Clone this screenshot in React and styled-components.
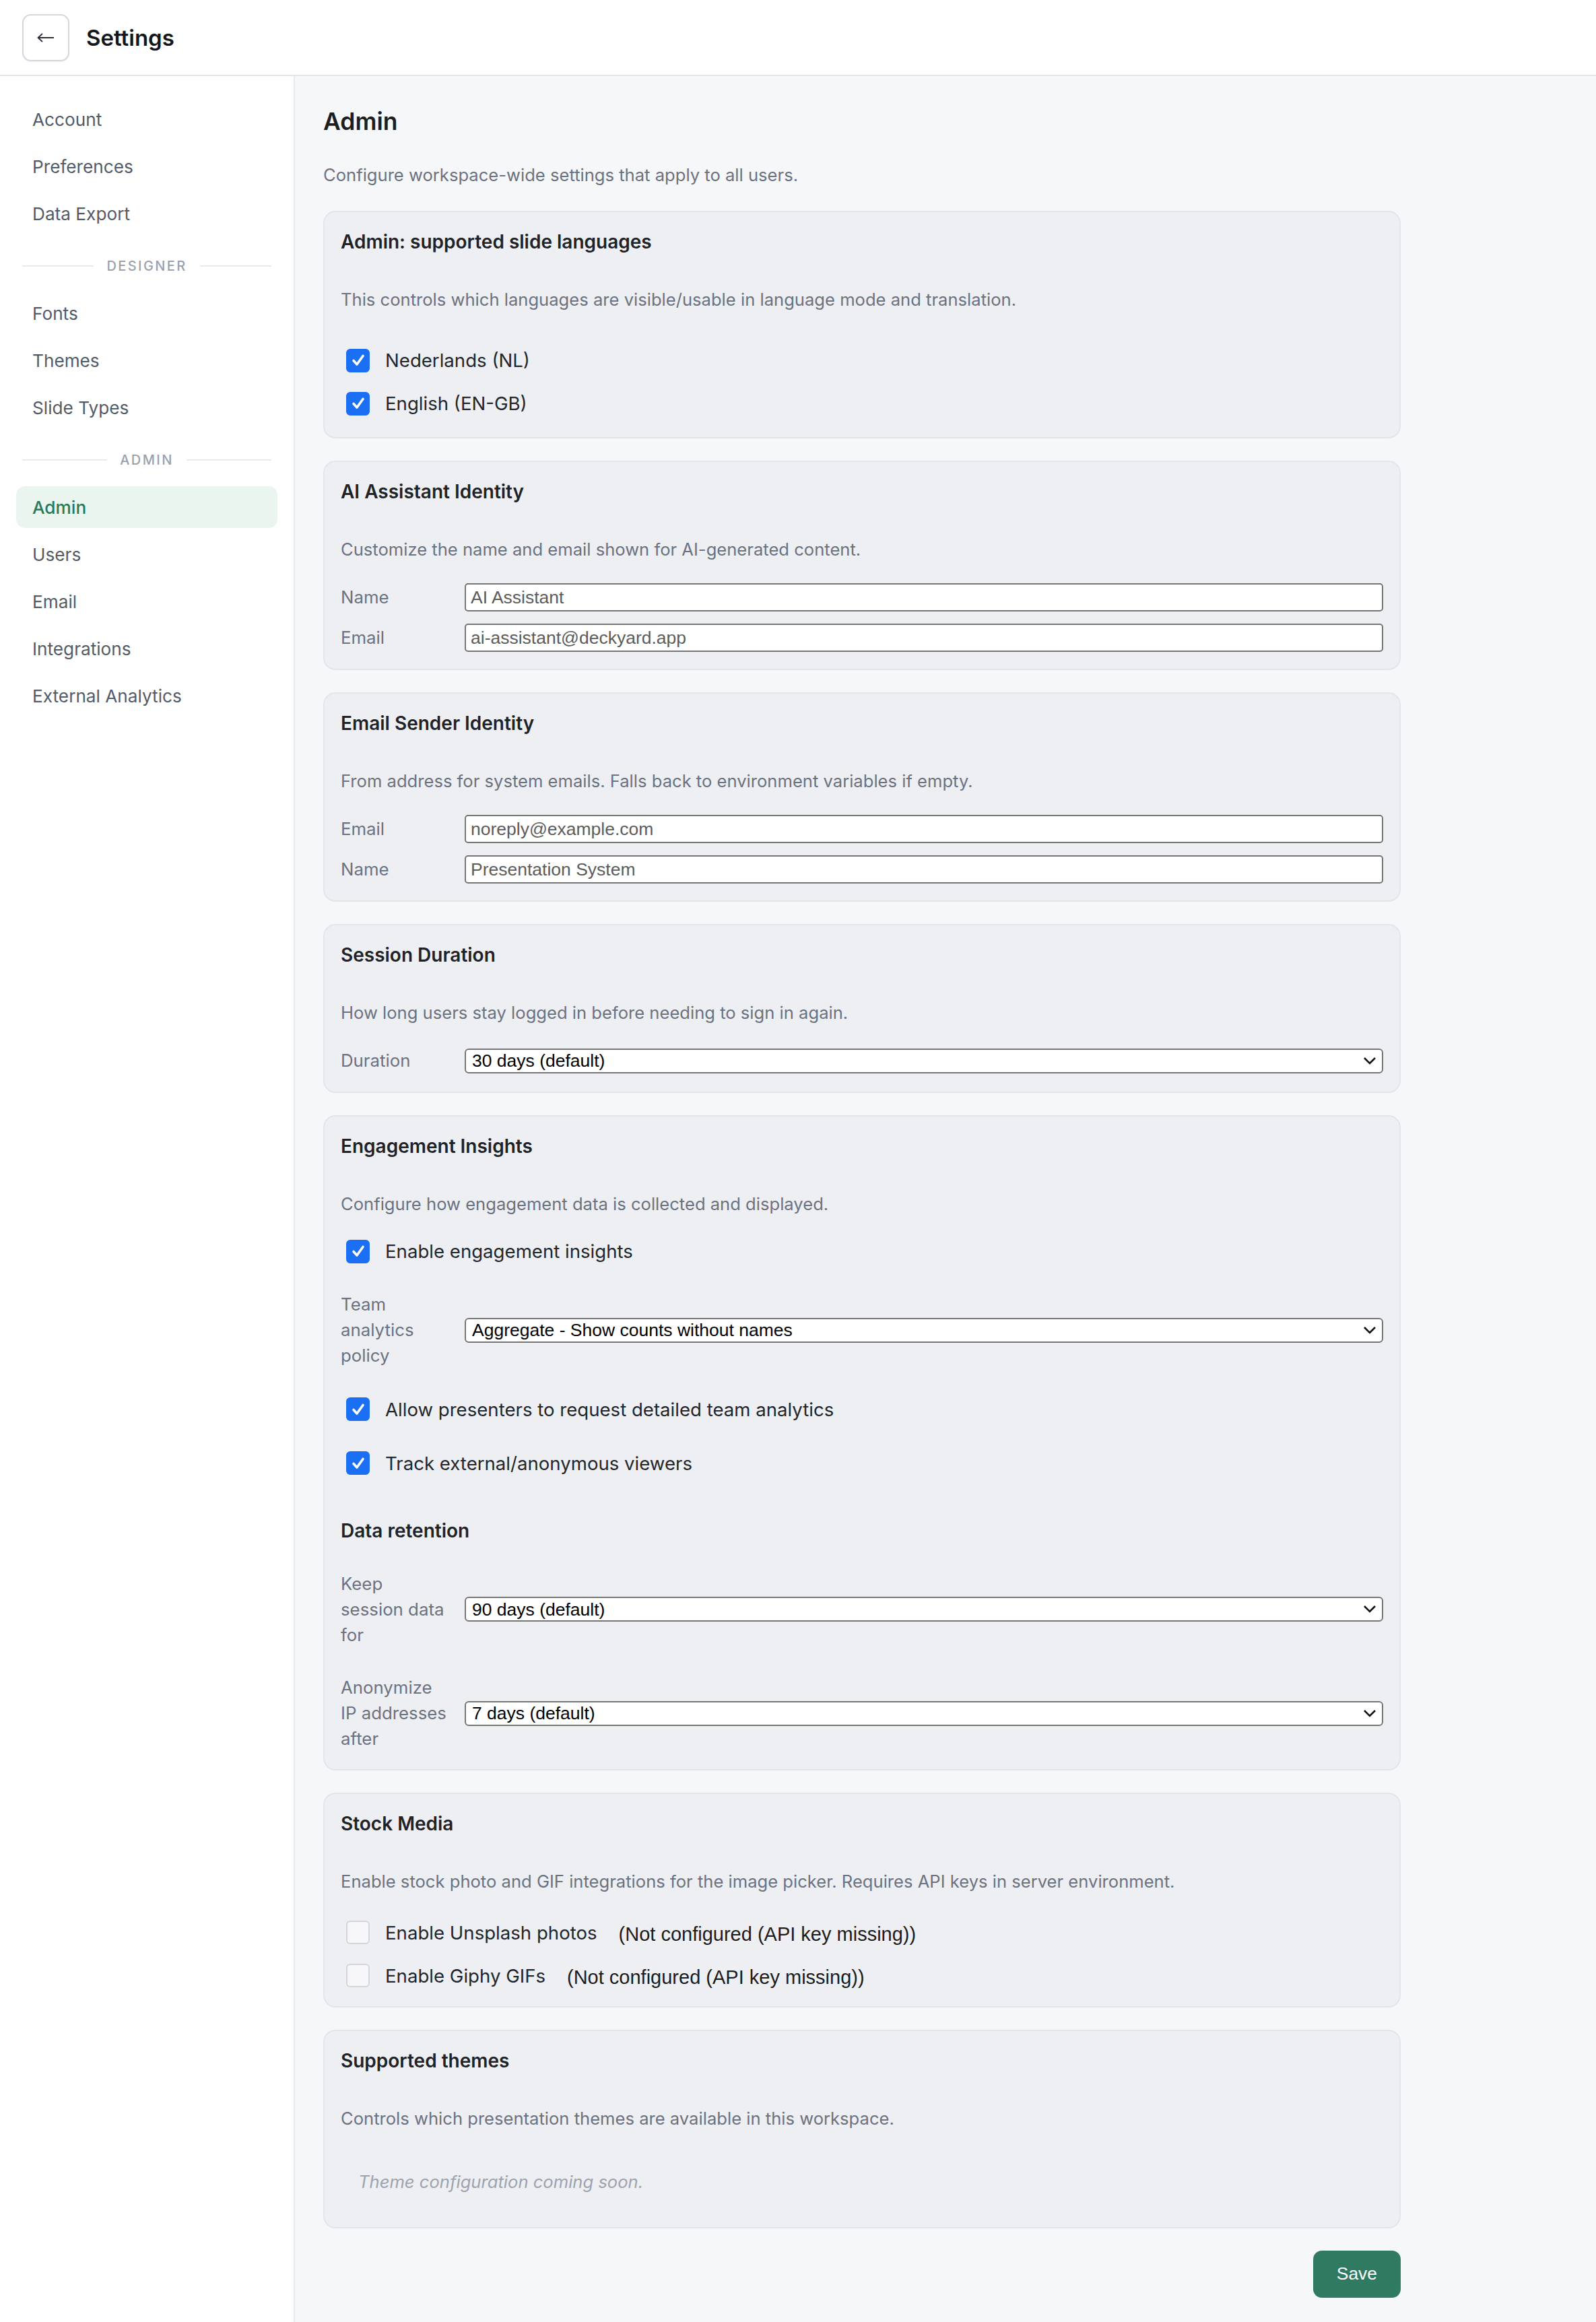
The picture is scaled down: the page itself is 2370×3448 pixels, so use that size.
import React from 'react'
import styled, { createGlobalStyle } from 'styled-components'

const GlobalStyle = createGlobalStyle`
  html, body {
    margin: 0;
    padding: 0;
    background: #f6f7f9;
  }

  body {
    font-family: Inter, 'Noto Sans', sans-serif;
    color: #1f2328;
  }

  * {
    box-sizing: border-box;
  }
`

const Page = styled.div`
  display: flex;
  flex-direction: column;
  min-height: 100vh;
`

const TopBar = styled.header`
  align-items: center;
  background: #fff;
  border-bottom: 2px solid #e4e6ea;
  display: flex;
  gap: 25px;
  height: 113px;
  padding: 0 33px;
`

const BackButton = styled.button`
  align-items: center;
  background: #fff;
  border: 2px solid #d3d7de;
  border-radius: 13px;
  box-shadow: 0 1px 2px rgba(16, 24, 40, 0.06);
  color: #374151;
  display: flex;
  height: 70px;
  justify-content: center;
  padding: 0;
  width: 70px;
`

const TopTitle = styled.h1`
  color: #14171c;
  font-size: 33px;
  font-weight: 600;
  margin: 0;
`

const Layout = styled.div`
  display: flex;
  flex: 1;
`

const Sidebar = styled.aside`
  background: #fff;
  border-right: 2px solid #e8eaee;
  flex: 0 0 438px;
  padding: 33px 24px;
`

const NavList = styled.nav`
  display: flex;
  flex-direction: column;
  gap: 8px;
`

const NavItem = styled.a`
  align-items: center;
  background: ${props => (props.$active ? '#ebf5f0' : 'transparent')};
  border-radius: 13px;
  color: ${props => (props.$active ? '#2b7a57' : '#535b68')};
  display: flex;
  font-size: 26.2px;
  font-weight: ${props => (props.$active ? 500 : 400)};
  height: 62px;
  padding: 0 24px;
  text-decoration: none;
`

const NavDivider = styled.div`
  align-items: center;
  color: #9aa1ad;
  display: flex;
  font-size: 20px;
  font-weight: 500;
  gap: 19px;
  height: 24px;
  letter-spacing: 0.12em;
  margin: 27px 0 19px;
  padding: 0 9px;

  &::before,
  &::after {
    background: #e8eaee;
    content: '';
    flex: 1;
    height: 2px;
  }
`

const Main = styled.main`
  flex: 1;
  padding: 44px 42px 41px;
`

const Content = styled.div`
  display: flex;
  flex-direction: column;
  gap: 33px;
  max-width: 1600px;
`

const Intro = styled.div``

const PageTitle = styled.h2`
  color: #1b1e23;
  font-size: 35.5px;
  font-weight: 600;
  line-height: 48px;
  margin: 0 0 35px;
`

const PageIntro = styled.p`
  color: #6b7280;
  font-size: 25.6px;
  line-height: 40px;
  margin: 0;
`

const Card = styled.section`
  background: #eeeff2;
  border: 2px solid #e3e5e9;
  border-radius: 18px;
  display: flex;
  flex-direction: column;
  padding: 24px 24px 25px;
`

const CardTitle = styled.h3`
  color: #1f2328;
  font-size: 28px;
  font-weight: 600;
  line-height: 40px;
  margin: ${props => (props.$spaced ? '20px 0 0' : '0')};
`

const CardDesc = styled.p`
  color: #6b7280;
  font-size: 25.6px;
  line-height: 40px;
  margin: 46px 0 30px;
`

const CardBody = styled.div`
  display: flex;
  flex-direction: column;
  gap: ${props => props.$gap || 18}px;
  padding: ${props => props.$pad || '0'};
`

const CheckRow = styled.label`
  align-items: center;
  display: flex;
  min-height: 40px;
`

const Box = styled.span`
  align-items: center;
  background: ${props => (props.$checked ? '#1a6ff5' : '#f7f7f9')};
  border: 2px solid ${props => (props.$checked ? '#1a6ff5' : '#d2d5da')};
  border-radius: 6px;
  display: flex;
  flex: 0 0 35px;
  height: 35px;
  justify-content: center;
  margin: 0 23px 0 8px;
  width: 35px;
`

const CheckText = styled.span`
  color: #22262d;
  font-size: 27.6px;
`

const Note = styled.span`
  color: #1c1c1c;
  font-family: 'Liberation Sans', Arial, sans-serif;
  font-size: 29px;
  margin: 6px 0 0 32px;
`

const FieldRow = styled.div`
  align-items: center;
  display: flex;
  gap: 23px;
  min-height: 42px;
`

const FieldLabel = styled.span`
  color: #6b7280;
  flex: 0 0 161px;
  font-size: 25.8px;
  line-height: 1.48;
`

const TextInput = styled.input`
  background: #fff;
  border: 2px solid #767676;
  border-radius: 5px;
  color: #5c5c5c;
  flex: 1;
  font-family: 'Liberation Sans', Arial, sans-serif;
  font-size: 26.5px;
  height: 42px;
  padding: 0 7px;
`

const SelectWrap = styled.div`
  display: flex;
  flex: 1;
  position: relative;
`

const Select = styled.select`
  appearance: none;
  background: #fff;
  border: 2px solid #767676;
  border-radius: 6px;
  color: #000;
  flex: 1;
  font-family: 'Liberation Sans', Arial, sans-serif;
  font-size: 26.5px;
  height: 37px;
  padding: 0 50px 0 9px;
`

const Chevron = styled.svg`
  pointer-events: none;
  position: absolute;
  right: 10px;
  top: 12px;
`

const ComingSoon = styled.p`
  color: #9ca3af;
  font-size: 25.6px;
  font-style: italic;
  line-height: 40px;
  margin: 0;
  padding: 24px 26px 22px;
`

const Actions = styled.div`
  display: flex;
  justify-content: flex-end;
`

const SaveButton = styled.button`
  background: #2f7a61;
  border: none;
  border-radius: 13px;
  color: #fff;
  font-family: 'Liberation Sans', Arial, sans-serif;
  font-size: 26.4px;
  height: 70px;
  padding: 0 35px;
`

const Checkbox = ({ checked, label, note }) => (
  <CheckRow>
    <Box $checked={checked}>
      {checked && (
        <svg width="24" height="24" viewBox="0 0 24 24">
          <path d="M5 12.5 L10 18 L19 5.5" fill="none" stroke="#fff" strokeWidth="3.6" strokeLinecap="round" strokeLinejoin="round" />
        </svg>
      )}
    </Box>
    <CheckText>{label}</CheckText>
    {note && <Note>{note}</Note>}
  </CheckRow>
)

const Field = ({ label, value }) => (
  <FieldRow>
    <FieldLabel>{label}</FieldLabel>
    <TextInput defaultValue={value} />
  </FieldRow>
)

const Dropdown = ({ label, value }) => (
  <FieldRow>
    <FieldLabel>{label}</FieldLabel>
    <SelectWrap>
      <Select defaultValue={value}>
        <option>{value}</option>
      </Select>
      <Chevron width="20" height="13" viewBox="0 0 20 13">
        <path d="M2 2 L10 10 L18 2" fill="none" stroke="#111" strokeWidth="2.6" />
      </Chevron>
    </SelectWrap>
  </FieldRow>
)

const nav = [
  { label: 'Account' },
  { label: 'Preferences' },
  { label: 'Data Export' },
  { divider: 'DESIGNER' },
  { label: 'Fonts' },
  { label: 'Themes' },
  { label: 'Slide Types' },
  { divider: 'ADMIN' },
  { label: 'Admin', active: true },
  { label: 'Users' },
  { label: 'Email' },
  { label: 'Integrations' },
  { label: 'External Analytics' },
]

const App = () => {
  return (
    <>
      <GlobalStyle />
      <Page>
        <TopBar>
          <BackButton aria-label="Back">
            <svg width="26" height="14" viewBox="0 0 26 14">
              <path d="M25 7 H2 M8 1 L1.5 7 L8 13" fill="none" stroke="#2b2f36" strokeWidth="1.8" />
            </svg>
          </BackButton>
          <TopTitle>Settings</TopTitle>
        </TopBar>
        <Layout>
          <Sidebar>
            <NavList>
              {nav.map((item, index) =>
                item.divider ? (
                  <NavDivider key={index}>{item.divider}</NavDivider>
                ) : (
                  <NavItem key={index} $active={item.active}>
                    {item.label}
                  </NavItem>
                )
              )}
            </NavList>
          </Sidebar>
          <Main>
            <Content>
              <Intro>
                <PageTitle>Admin</PageTitle>
                <PageIntro>Configure workspace-wide settings that apply to all users.</PageIntro>
              </Intro>

              <Card>
                <CardTitle>Admin: supported slide languages</CardTitle>
                <CardDesc>This controls which languages are visible/usable in language mode and translation.</CardDesc>
                <CardBody $gap={24} $pad="20px 0 5px">
                  <Checkbox checked label="Nederlands (NL)" />
                  <Checkbox checked label="English (EN-GB)" />
                </CardBody>
              </Card>

              <Card>
                <CardTitle>AI Assistant Identity</CardTitle>
                <CardDesc>Customize the name and email shown for AI-generated content.</CardDesc>
                <CardBody>
                  <Field label="Name" value="AI Assistant" />
                  <Field label="Email" value="ai-assistant@deckyard.app" />
                </CardBody>
              </Card>

              <Card>
                <CardTitle>Email Sender Identity</CardTitle>
                <CardDesc>From address for system emails. Falls back to environment variables if empty.</CardDesc>
                <CardBody>
                  <Field label="Email" value="noreply@example.com" />
                  <Field label="Name" value="Presentation System" />
                </CardBody>
              </Card>

              <Card>
                <CardTitle>Session Duration</CardTitle>
                <CardDesc>How long users stay logged in before needing to sign in again.</CardDesc>
                <CardBody>
                  <Dropdown label="Duration" value="30 days (default)" />
                </CardBody>
              </Card>

              <Card>
                <CardTitle>Engagement Insights</CardTitle>
                <CardDesc>Configure how engagement data is collected and displayed.</CardDesc>
                <CardBody $gap={40}>
                  <Checkbox checked label="Enable engagement insights" />
                  <Dropdown label="Team analytics policy" value="Aggregate - Show counts without names" />
                  <Checkbox checked label="Allow presenters to request detailed team analytics" />
                  <Checkbox checked label="Track external/anonymous viewers" />
                  <CardTitle $spaced>Data retention</CardTitle>
                  <Dropdown label="Keep session data for" value="90 days (default)" />
                  <Dropdown label="Anonymize IP addresses after" value="7 days (default)" />
                </CardBody>
              </Card>

              <Card>
                <CardTitle>Stock Media</CardTitle>
                <CardDesc>
                  Enable stock photo and GIF integrations for the image picker. Requires API keys in server environment.
                </CardDesc>
                <CardBody $gap={24} $pad="6px 0 0">
                  <Checkbox label="Enable Unsplash photos" note="(Not configured (API key missing))" />
                  <Checkbox label="Enable Giphy GIFs" note="(Not configured (API key missing))" />
                </CardBody>
              </Card>

              <Card>
                <CardTitle>Supported themes</CardTitle>
                <CardDesc>Controls which presentation themes are available in this workspace.</CardDesc>
                <ComingSoon>Theme configuration coming soon.</ComingSoon>
              </Card>

              <Actions>
                <SaveButton>Save</SaveButton>
              </Actions>
            </Content>
          </Main>
        </Layout>
      </Page>
    </>
  )
}

export default App
